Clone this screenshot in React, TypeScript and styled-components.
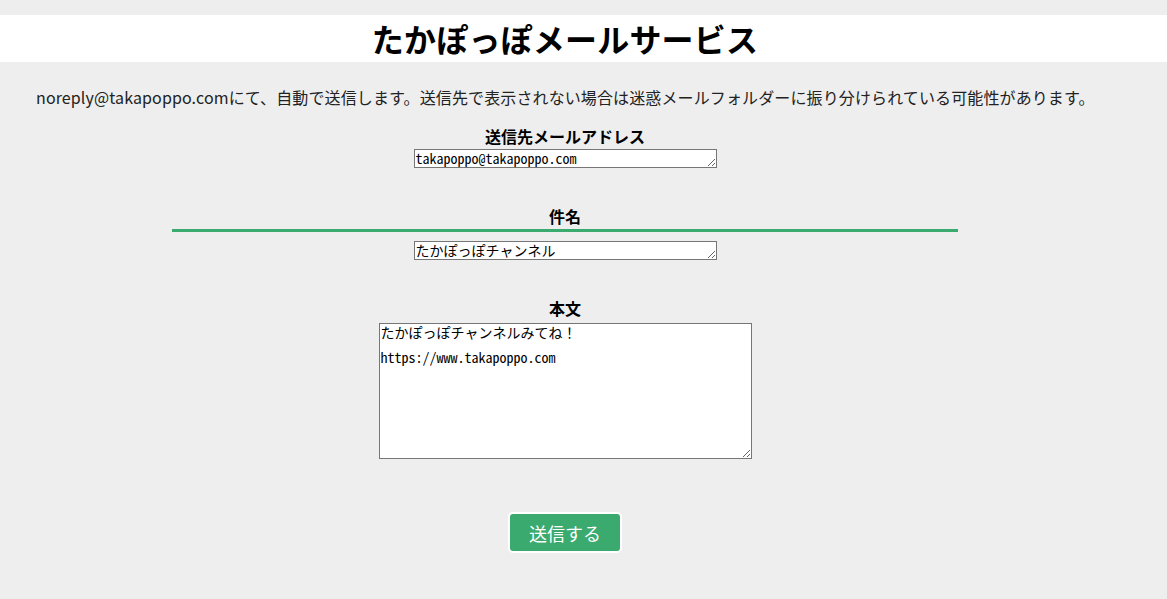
import styled, { createGlobalStyle } from "styled-components";

const GlobalStyle = createGlobalStyle`
  html, body {
    margin: 0;
    padding: 0;
    background: #eeeeee;
    color: #000;
    font-family: "Noto Sans CJK JP", "Liberation Sans", sans-serif;
  }
`;

const fields = [
  { label: "送信先メールアドレス", value: "takapoppo@takapoppo.com", large: false, divider: false },
  { label: "件名", value: "たかぽっぽチャンネル", large: false, divider: true },
  {
    label: "本文",
    value: "たかぽっぽチャンネルみてね！\n\nhttps://www.takapoppo.com",
    large: true,
    divider: false,
  },
];

function App() {
  return (
    <>
      <GlobalStyle />
      <Page>
        <Header>
          <Title>たかぽっぽメールサービス</Title>
        </Header>
        <Notice>
          noreply@takapoppo.comにて、自動で送信します。送信先で表示されない場合は迷惑メールフォルダーに振り分けられている可能性があります。
        </Notice>
        <Form onSubmit={(e) => e.preventDefault()}>
          {fields.map((f) => (
            <Field key={f.label}>
              <Label>{f.label}</Label>
              {f.divider && <Divider />}
              <Input $large={f.large} defaultValue={f.value} />
            </Field>
          ))}
          <SendButton type="submit">送信する</SendButton>
        </Form>
      </Page>
    </>
  );
}

export default App;

const Page = styled.div`
  padding-top: 15px;
  min-height: 599px;
  box-sizing: border-box;
`;

const Header = styled.header`
  background: #ffffff;
  height: 47px;
  padding-right: 37px;
  display: flex;
  justify-content: center;
  align-items: center;
`;

const Title = styled.h1`
  margin: 0;
  font-size: 32px;
  font-weight: 700;
  line-height: 47px;
  letter-spacing: 0.2px;
`;

const Notice = styled.p`
  margin: 23px 0 0;
  padding-left: 36px;
  font-size: 16px;
  line-height: 24px;
  letter-spacing: 0.12px;
  color: #222;
  white-space: nowrap;
`;

const Form = styled.form`
  width: 1130px;
  display: flex;
  flex-direction: column;
  align-items: center;
  padding-top: 15px;
`;

const Field = styled.div`
  display: flex;
  flex-direction: column;
  align-items: center;
  margin-bottom: 36px;
`;

const Label = styled.label`
  font-size: 16px;
  font-weight: 700;
  line-height: 24px;
  height: 25px;
`;

const Divider = styled.div`
  width: 786px;
  height: 3px;
  background: #3aaa6e;
  margin: 0 0 9px;
`;

const Input = styled.textarea<{ $large?: boolean }>`
  box-sizing: border-box;
  width: ${({ $large }) => ($large ? "373px" : "303px")};
  height: ${({ $large }) => ($large ? "136px" : "19px")};
  border: 1px solid #767676;
  background: #fff;
  padding: ${({ $large }) => ($large ? "2px 1px" : "0 1px")};
  margin: ${({ $large }) => ($large ? "2px 0 0" : "0")};
  font-family: "Noto Sans Mono CJK JP", "Liberation Mono", monospace;
  font-size: 14px;
  line-height: ${({ $large }) => ($large ? "12.5px" : "17px")};
  color: #000;
  overflow: hidden;
`;

const SendButton = styled.button`
  box-sizing: border-box;
  margin-top: 17px;
  width: 114px;
  height: 41px;
  border: 2px solid #ffffff;
  border-radius: 5px;
  background: #3aaa6e;
  color: #ffffff;
  font-family: "Noto Sans CJK JP", "Liberation Sans", sans-serif;
  font-size: 18px;
  line-height: 1;
  cursor: pointer;
`;
